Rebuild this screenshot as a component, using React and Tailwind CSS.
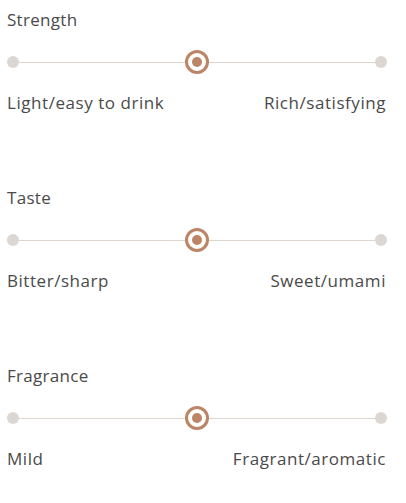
import React from 'react';

const scales = [
  { title: 'Strength', left: 'Light/easy to drink', right: 'Rich/satisfying' },
  { title: 'Taste', left: 'Bitter/sharp', right: 'Sweet/umami' },
  { title: 'Fragrance', left: 'Mild', right: 'Fragrant/aromatic' },
];

const Scale = ({ title, left, right }) => {
  return (
    <div className="flex flex-col">
      <h3 className="text-[17px] leading-6 tracking-[0.3px] text-[#4a4a4a]">{title}</h3>
      <div className="mt-[18px] flex h-6 items-center">
        <span className="h-3 w-3 rounded-full bg-[#dcd7d2]" />
        <span className="h-px flex-1 bg-[#ddd5cc]" />
        <span className="flex h-6 w-6 items-center justify-center rounded-full border-[3px] border-[#bb8566] bg-white">
          <span className="h-[10px] w-[10px] rounded-full bg-[#bb8566]" />
        </span>
        <span className="h-px flex-1 bg-[#ddd5cc]" />
        <span className="h-3 w-3 rounded-full bg-[#dcd7d2]" />
      </div>
      <div className="mt-[17px] flex justify-between pr-px text-[17px] leading-6 tracking-[0.55px] text-[#4a4a4a]">
        <span>{left}</span>
        <span>{right}</span>
      </div>
    </div>
  );
};

export default function App() {
  return (
    <div className="flex h-[503px] w-[406px] flex-col gap-[71px] overflow-hidden bg-white pl-[7px] pr-[19px] pt-2 font-['Open_Sans',sans-serif]">
      {scales.map((s) => (
        <Scale key={s.title} {...s} />
      ))}
    </div>
  );
}
